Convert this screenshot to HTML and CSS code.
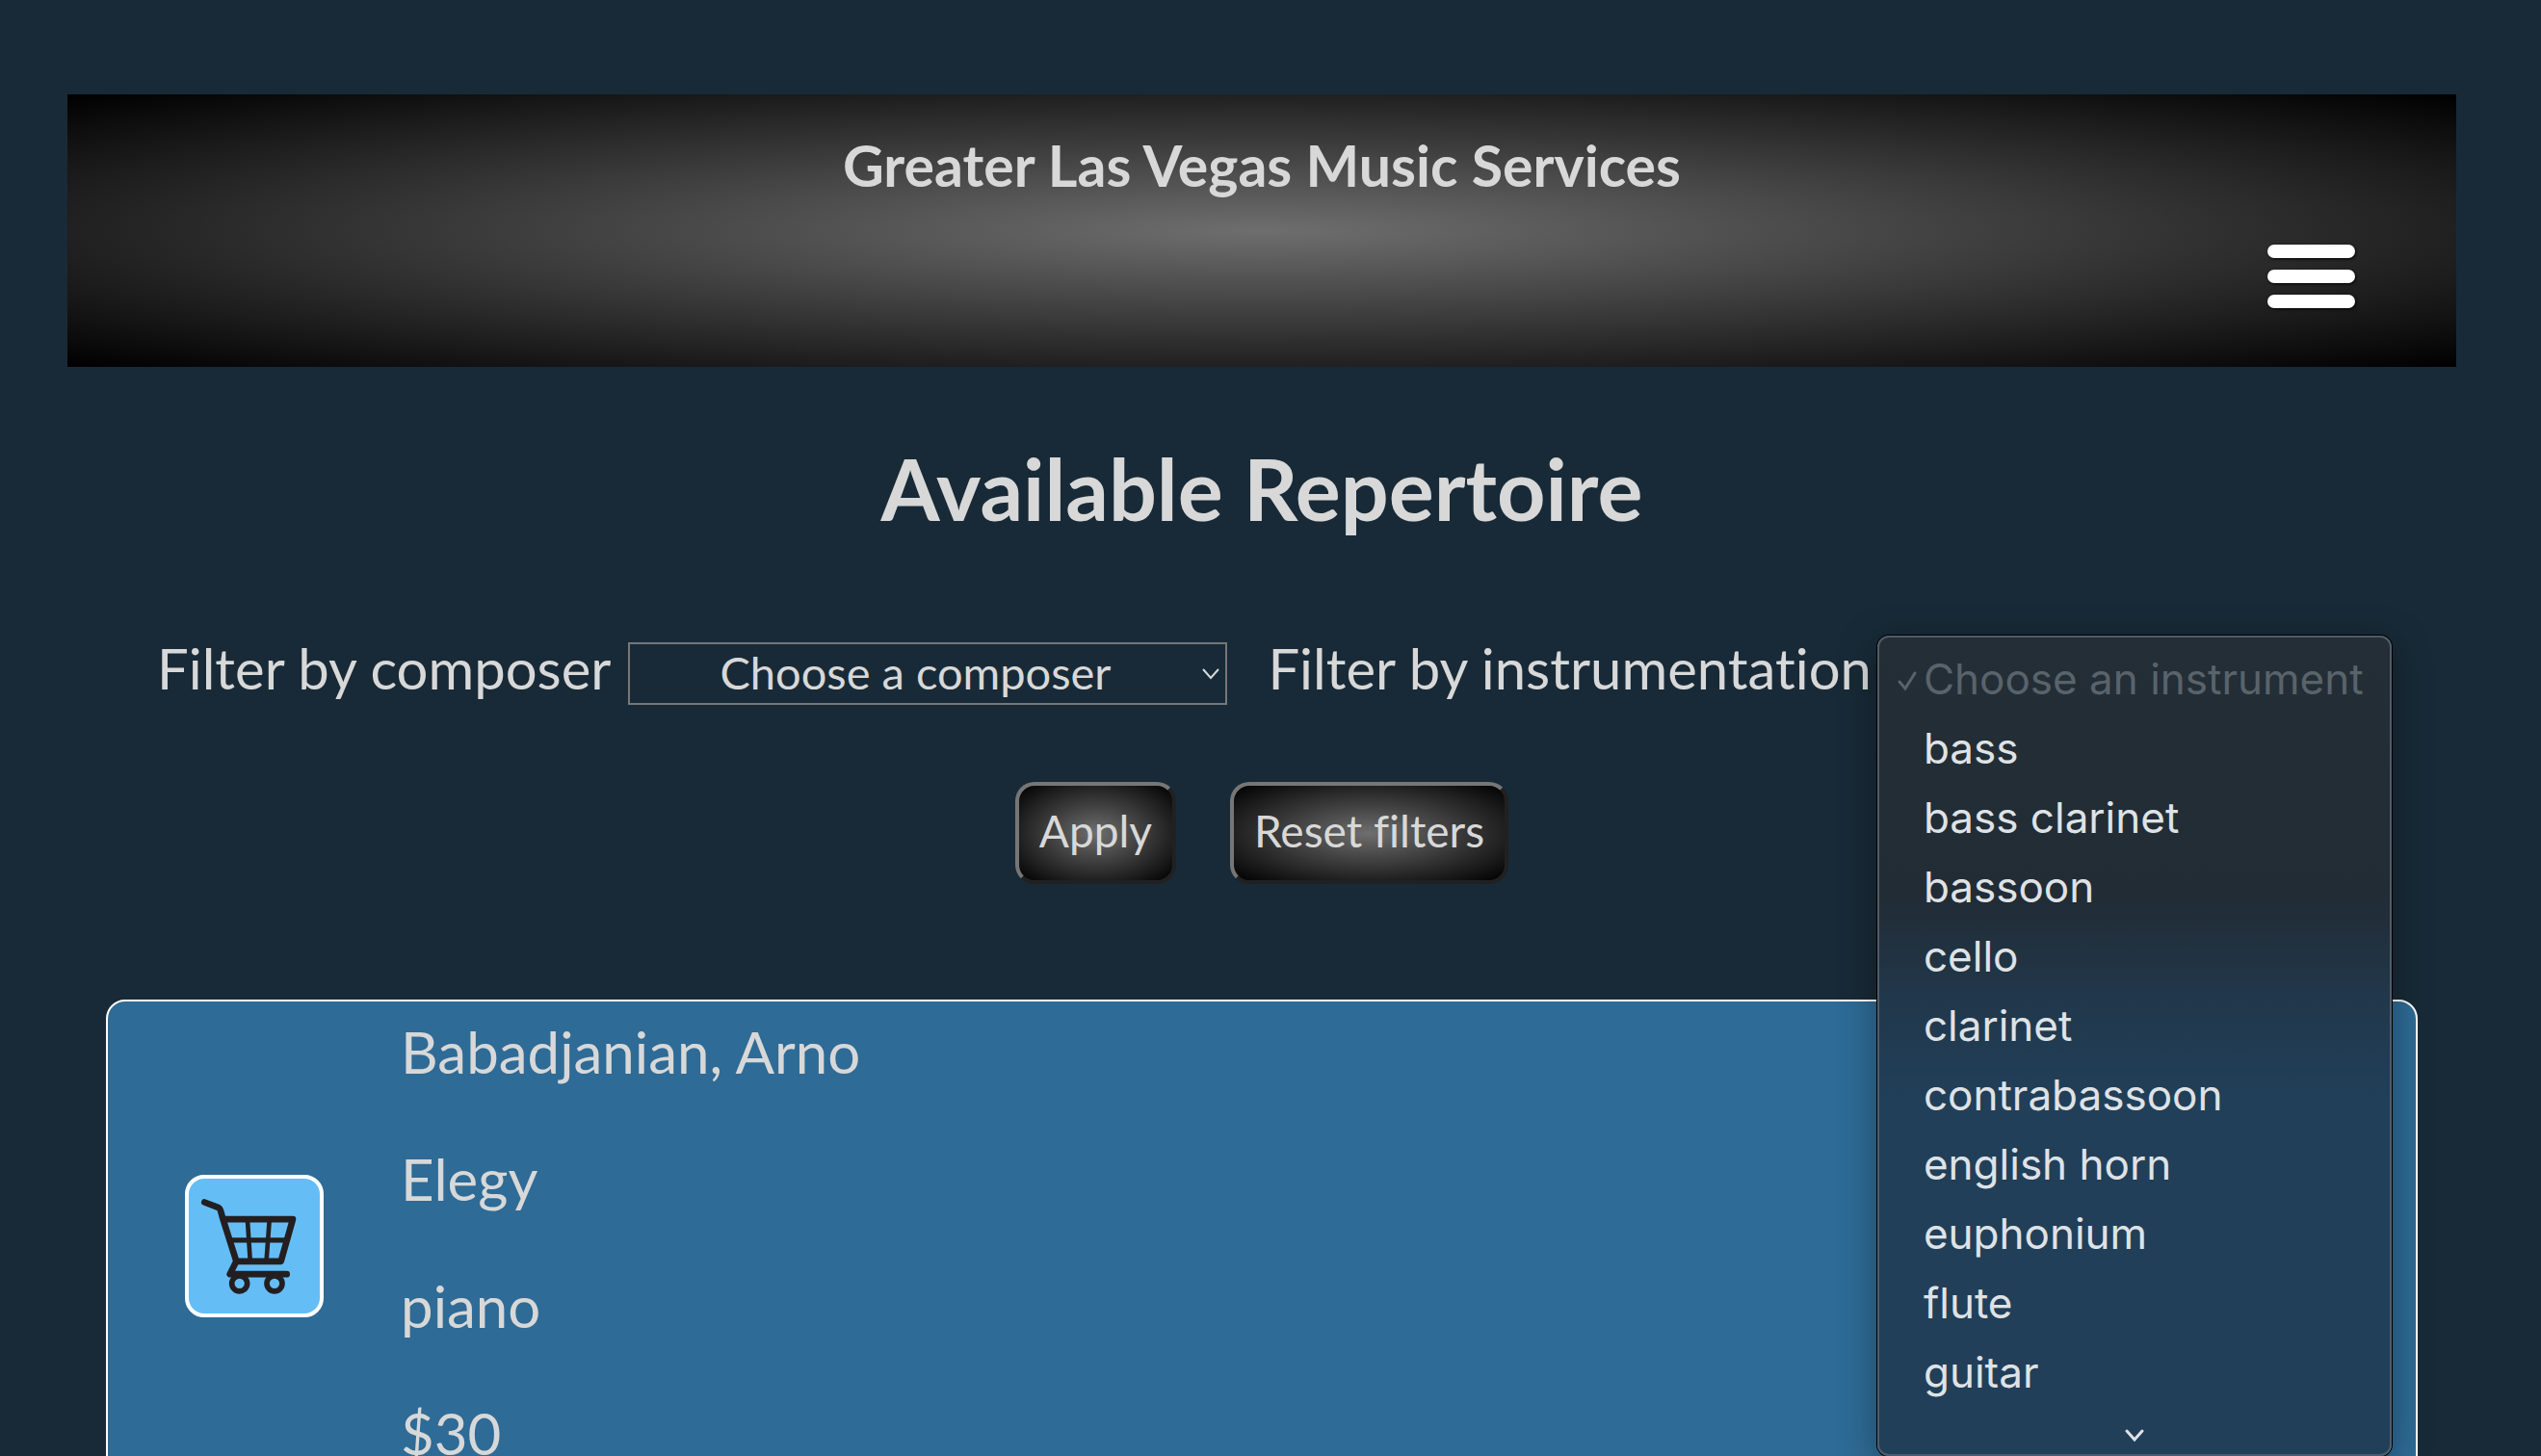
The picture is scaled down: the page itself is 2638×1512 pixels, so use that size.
FILE: index.html
```html
<!DOCTYPE html>
<html lang="en">
<head>
<meta charset="utf-8">
<title>Greater Las Vegas Music Services</title>
<link rel="stylesheet" href="styles.css">
</head>
<body>
<header class="site-header">
  <p class="site-title">Greater Las Vegas Music Services</p>
  <button class="menu-button" type="button" aria-label="Menu">
    <span class="menu-bar"></span>
    <span class="menu-bar"></span>
    <span class="menu-bar"></span>
  </button>
</header>
<main>
  <h1 class="page-title">Available Repertoire</h1>
  <form class="filters">
    <div class="filter-row">
      <div class="filter">
        <label for="composer">Filter by composer</label>
        <div class="select-box">
          <select id="composer" class="select"><option>Choose a composer</option></select>
          <svg class="select-arrow" viewBox="0 0 18 12" aria-hidden="true"><path d="M1 1l8 9 8-9"/></svg>
        </div>
      </div>
      <div class="filter">
        <label for="instrument">Filter by instrumentation</label>
        <div class="select-box select-box-narrow">
          <select id="instrument" class="select"><option></option></select>
          <ul class="popup" role="listbox" aria-label="Instruments">
            <li class="popup-item popup-item-current" role="option" aria-selected="true"><svg class="check" viewBox="0 0 20 20" aria-hidden="true"><path d="M2 11l6 7L18 2"/></svg>Choose an instrument</li>
            <li class="popup-item" role="option">bass</li>
            <li class="popup-item" role="option">bass clarinet</li>
            <li class="popup-item" role="option">bassoon</li>
            <li class="popup-item" role="option">cello</li>
            <li class="popup-item" role="option">clarinet</li>
            <li class="popup-item" role="option">contrabassoon</li>
            <li class="popup-item" role="option">english horn</li>
            <li class="popup-item" role="option">euphonium</li>
            <li class="popup-item" role="option">flute</li>
            <li class="popup-item" role="option">guitar</li>
            <li class="popup-more" role="presentation"><svg class="more-arrow" viewBox="0 0 20 14" aria-hidden="true"><path d="M2 2l8 9 8-9"/></svg></li>
          </ul>
        </div>
      </div>
    </div>
    <div class="actions">
      <button class="action" type="button">Apply</button>
      <button class="action" type="reset">Reset filters</button>
    </div>
  </form>
  <article class="card">
    <button class="cart-button" type="button" aria-label="Add to cart">
      <svg class="cart-icon" viewBox="48 42 408 419" aria-hidden="true">
        <path class="cart-frame" d="M97 115L141 132Q145 134 147 141L154 166L196 299M158 168H372L335 299H196L176 339H353"/>
        <path class="cart-rail" d="M178 233H354"/>
        <path class="cart-wire" d="M231 172L239 294M299 172L290 294"/>
        <circle class="cart-wheel" cx="206" cy="368" r="24"/>
        <circle class="cart-wheel" cx="315" cy="368" r="24"/>
      </svg>
    </button>
    <div class="card-text">
      <p>Babadjanian, Arno</p>
      <p>Elegy</p>
      <p>piano</p>
      <p>$30</p>
    </div>
  </article>
</main>
</body>
</html>
```
FILE: styles.css
```css
* { box-sizing: border-box; }

body {
  margin: 0;
  height: 100vh;
  overflow: hidden;
  padding: 98px 88px 0 70px;
  background: #182a37;
  color: #d8d8d8;
  font-family: Lato, sans-serif;
  font-size: 60px;
  font-variant-ligatures: none;
  line-height: 72px;
}

p, h1, ul { margin: 0; padding: 0; }

button, select { font: inherit; color: inherit; }

.site-header {
  display: flex;
  flex-direction: column;
  padding: 38px 105px 61px;
  background: radial-gradient(#6e6e6e, #000);
}

.site-title {
  text-align: center;
  font-size: 59px;
  font-weight: 700;
}

.menu-button {
  align-self: flex-end;
  display: flex;
  flex-direction: column;
  gap: 12px;
  margin-top: 46px;
  padding: 0;
  border: 0;
  background: none;
}

.menu-bar {
  width: 91px;
  height: 14px;
  border-radius: 7px;
  background: #fff;
  box-shadow: 1px 1px 3px #000;
}

.page-title {
  margin-top: 73px;
  text-align: center;
  font-size: 88px;
  line-height: 106px;
  font-weight: 700;
}

.filter-row {
  display: flex;
  justify-content: center;
  gap: 42px;
  margin-top: 98px;
}

.filter {
  display: flex;
  align-items: flex-start;
  gap: 18px;
  font-size: 58px;
  white-space: nowrap;
}

.select-box {
  position: relative;
  display: flex;
  width: 622px;
  margin-top: 9px;
}

.select-box-narrow { width: 496px; }

.select {
  appearance: none;
  width: 100%;
  height: 65px;
  padding: 0 26px 4px 0;
  border: 2px solid #777;
  border-radius: 0;
  background: transparent;
  font-size: 47px;
  line-height: 56px;
  text-align: center;
  text-align-last: center;
}

.select-arrow {
  position: absolute;
  top: 27px;
  right: 8px;
  width: 18px;
  height: 12px;
  fill: none;
  stroke: #d8d8d8;
  stroke-width: 2;
}

.popup {
  position: absolute;
  z-index: 1;
  top: -7px;
  left: -12px;
  width: 534px;
  padding: 7px 0 6px;
  list-style: none;
  border: 2px solid #4f5d68;
  border-radius: 12px;
  background: linear-gradient(#242e36, #212c35 270px, #21384c 380px, #213f59 480px);
  box-shadow: 0 0 0 1px #000, 0 10px 40px rgba(0, 0, 0, 0.35);
  color: #dfe2e5;
  font-family: Inter, sans-serif;
  font-size: 44px;
  line-height: 72px;
}

.popup-item {
  position: relative;
  padding-left: 46px;
}

.popup-item-current { color: #59636b; }

.check {
  position: absolute;
  top: 28px;
  left: 19px;
  width: 20px;
  height: 20px;
  fill: none;
  stroke: #59636b;
  stroke-width: 3;
  stroke-linecap: round;
}

.popup-more {
  display: flex;
  justify-content: center;
  padding: 23px 0 6px;
}

.more-arrow {
  width: 20px;
  height: 14px;
  fill: none;
  stroke: #dfe2e5;
  stroke-width: 3;
  stroke-linecap: round;
}

.actions {
  display: flex;
  justify-content: center;
  gap: 56px;
  margin-top: 80px;
}

.action {
  padding: 17px 21px 21px;
  border: 4px solid;
  border-color: #767676 #212121 #212121 #767676;
  border-radius: 20px;
  background: radial-gradient(#6e6e6e, #000);
  font-size: 46px;
  line-height: 60px;
}

.card {
  display: flex;
  align-items: center;
  gap: 80px;
  margin: 120px 40px 0;
  padding: 0 80px;
  border: 2px solid #fff;
  border-radius: 20px;
  background: #2e6b96;
}

.card-text {
  display: flex;
  flex-direction: column;
  gap: 60px;
  padding: 16px 0 24px;
}

.cart-button {
  display: flex;
  padding: 0;
  border: 4px solid #fff;
  border-radius: 20px;
  background: #65bdf6;
}

.cart-icon {
  width: 136px;
  height: 140px;
  fill: none;
  stroke: #231f20;
  stroke-linecap: round;
  stroke-linejoin: round;
}

.cart-frame { stroke-width: 20; }
.cart-rail { stroke-width: 16; }
.cart-wire { stroke-width: 14; }
.cart-wheel { stroke-width: 17; }
```
